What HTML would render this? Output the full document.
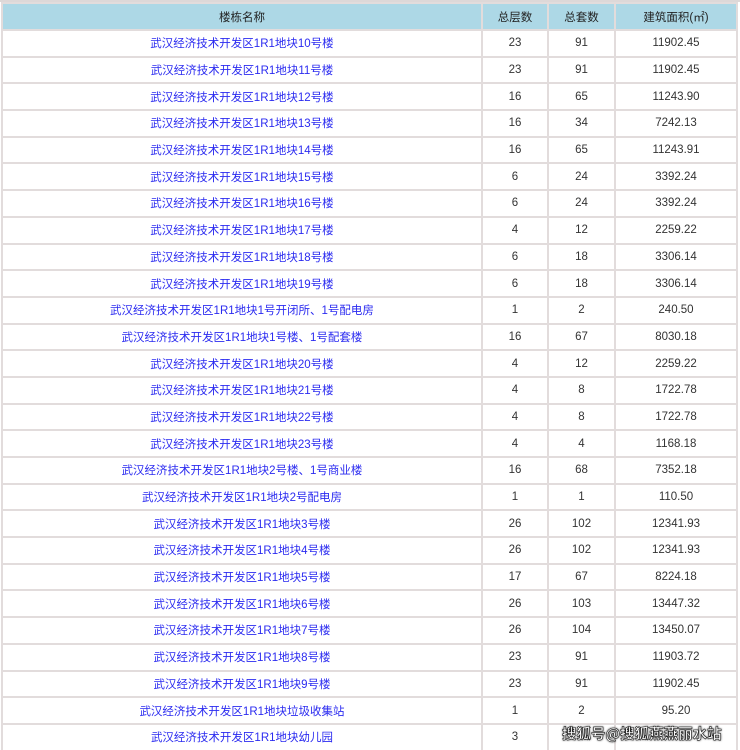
<!DOCTYPE html>
<html><head><meta charset="utf-8"><style>
html,body{margin:0;padding:0;background:#fff;width:740px;height:750px;overflow:hidden;position:relative}
.top{position:absolute;left:0;top:0;width:740px;height:2px;background:#ddd8d8}
table{position:absolute;left:1px;top:2px;border-collapse:collapse;table-layout:fixed;width:737px;font-family:"Liberation Sans","Noto Sans CJK SC",sans-serif;font-size:11.5px}
td,th{border:2px solid #e2dcdc;text-align:center;padding:0;height:24.7px;white-space:nowrap;overflow:hidden}
th{background:#add8e6;font-weight:normal;color:#222;height:25px}
td{color:#333}
td.n{color:#2b2bf0}
.wm{position:absolute;left:562px;top:723px;font-family:"Noto Sans CJK SC",sans-serif;font-size:14.5px;font-weight:bold;color:#fff;-webkit-text-stroke:0.6px #222;text-shadow:0 0 2px #000}
</style></head><body>
<div class="top"></div>
<table>
<colgroup><col style="width:480px"><col style="width:66px"><col style="width:67px"><col style="width:122px"></colgroup>
<tr><th>楼栋名称</th><th>总层数</th><th>总套数</th><th>建筑面积(㎡)</th></tr>
<tr><td class="n">武汉经济技术开发区1R1地块10号楼</td><td>23</td><td>91</td><td>11902.45</td></tr>
<tr><td class="n">武汉经济技术开发区1R1地块11号楼</td><td>23</td><td>91</td><td>11902.45</td></tr>
<tr><td class="n">武汉经济技术开发区1R1地块12号楼</td><td>16</td><td>65</td><td>11243.90</td></tr>
<tr><td class="n">武汉经济技术开发区1R1地块13号楼</td><td>16</td><td>34</td><td>7242.13</td></tr>
<tr><td class="n">武汉经济技术开发区1R1地块14号楼</td><td>16</td><td>65</td><td>11243.91</td></tr>
<tr><td class="n">武汉经济技术开发区1R1地块15号楼</td><td>6</td><td>24</td><td>3392.24</td></tr>
<tr><td class="n">武汉经济技术开发区1R1地块16号楼</td><td>6</td><td>24</td><td>3392.24</td></tr>
<tr><td class="n">武汉经济技术开发区1R1地块17号楼</td><td>4</td><td>12</td><td>2259.22</td></tr>
<tr><td class="n">武汉经济技术开发区1R1地块18号楼</td><td>6</td><td>18</td><td>3306.14</td></tr>
<tr><td class="n">武汉经济技术开发区1R1地块19号楼</td><td>6</td><td>18</td><td>3306.14</td></tr>
<tr><td class="n">武汉经济技术开发区1R1地块1号开闭所、1号配电房</td><td>1</td><td>2</td><td>240.50</td></tr>
<tr><td class="n">武汉经济技术开发区1R1地块1号楼、1号配套楼</td><td>16</td><td>67</td><td>8030.18</td></tr>
<tr><td class="n">武汉经济技术开发区1R1地块20号楼</td><td>4</td><td>12</td><td>2259.22</td></tr>
<tr><td class="n">武汉经济技术开发区1R1地块21号楼</td><td>4</td><td>8</td><td>1722.78</td></tr>
<tr><td class="n">武汉经济技术开发区1R1地块22号楼</td><td>4</td><td>8</td><td>1722.78</td></tr>
<tr><td class="n">武汉经济技术开发区1R1地块23号楼</td><td>4</td><td>4</td><td>1168.18</td></tr>
<tr><td class="n">武汉经济技术开发区1R1地块2号楼、1号商业楼</td><td>16</td><td>68</td><td>7352.18</td></tr>
<tr><td class="n">武汉经济技术开发区1R1地块2号配电房</td><td>1</td><td>1</td><td>110.50</td></tr>
<tr><td class="n">武汉经济技术开发区1R1地块3号楼</td><td>26</td><td>102</td><td>12341.93</td></tr>
<tr><td class="n">武汉经济技术开发区1R1地块4号楼</td><td>26</td><td>102</td><td>12341.93</td></tr>
<tr><td class="n">武汉经济技术开发区1R1地块5号楼</td><td>17</td><td>67</td><td>8224.18</td></tr>
<tr><td class="n">武汉经济技术开发区1R1地块6号楼</td><td>26</td><td>103</td><td>13447.32</td></tr>
<tr><td class="n">武汉经济技术开发区1R1地块7号楼</td><td>26</td><td>104</td><td>13450.07</td></tr>
<tr><td class="n">武汉经济技术开发区1R1地块8号楼</td><td>23</td><td>91</td><td>11903.72</td></tr>
<tr><td class="n">武汉经济技术开发区1R1地块9号楼</td><td>23</td><td>91</td><td>11902.45</td></tr>
<tr><td class="n">武汉经济技术开发区1R1地块垃圾收集站</td><td>1</td><td>2</td><td>95.20</td></tr>
<tr><td class="n">武汉经济技术开发区1R1地块幼儿园</td><td>3</td><td></td><td></td></tr>
</table>
<div class="wm">搜狐号@搜狐燕燕丽水站</div>
</body></html>
